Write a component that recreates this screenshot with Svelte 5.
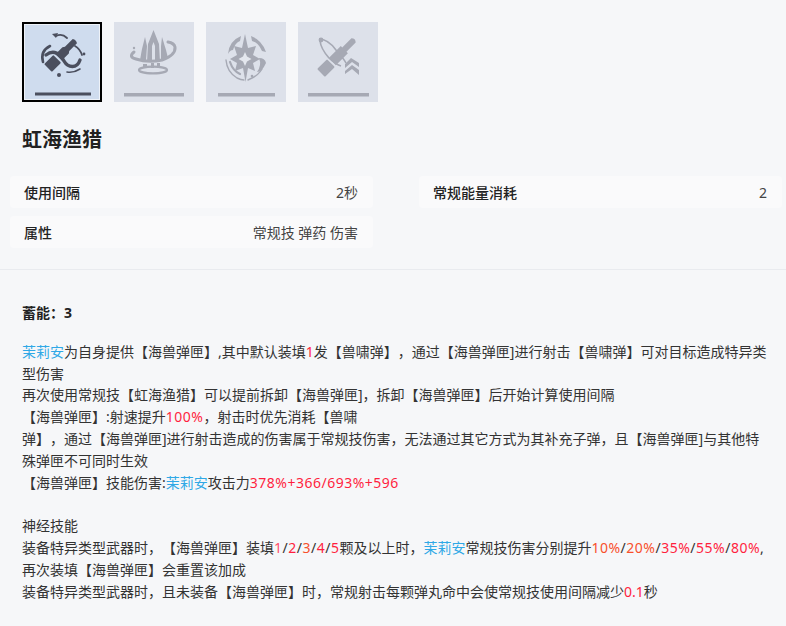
<script>
  const tabs = [0, 1, 2, 3];
  const rows = [
    { label: "使用间隔", value: "2秒" },
    { label: "常规能量消耗", value: "2" },
    { label: "属性", value: "常规技 弹药 伤害" },
  ];
</script>

<div class="page">
  <div class="tabs">
    {#each tabs as t}
      <div class="tab" class:active={t === 0}>
        <svg viewBox="0 0 80 80" width="80" height="80" aria-hidden="true">
          {#if t === 0}
            <g fill="#4b4f5e" stroke="none">
              <g transform="translate(38 34) rotate(-45)">
                <rect x="-17" y="-5.5" width="13" height="11" rx="1" />
                <path d="M-2 -4.5 H8 L10 -3 H21 Q23 0 21 3 H10 L8 4.5 H-2 Z" />
              </g>
              <path d="M30 12 l6 -1 l-2 5 Z" />
              <circle cx="37" cy="53" r="2" />
              <circle cx="62" cy="32" r="1.4" />
              <rect x="13" y="70.5" width="56" height="3" />
            </g>
            <g fill="none" stroke="#4b4f5e" stroke-linecap="round">
              <path d="M21 40 Q18 29 28 24" stroke-width="2.6" />
              <path d="M24 33 C32 27 38 32 42 39 C46 46 55 47 58 38" stroke-width="3.4" />
              <path d="M53 24 Q58 27 60 33" stroke-width="1.8" />
              <path d="M34 14 Q40 11 45 16" stroke-width="1.8" />
              <path d="M45 50 Q52 51 58 47" stroke-width="1.6" />
            </g>
          {:else if t === 1}
            <g fill="#a6a9b4">
              <path d="M39.5 8 L45 22 L46 40 H41 V24 L39.5 20 L38 24 V40 H33 L34 22 Z" />
              <path d="M31 15 L33 24 L32 38 L26 38 L28 27 Z" />
              <path d="M48 15 L52 28 L54 36 L47 38 L47 24 Z" />
              <rect x="29" y="42" width="4" height="3.5" />
              <rect x="37" y="41" width="3" height="5" />
              <rect x="43" y="41" width="3" height="5" />
              <circle cx="20" cy="26" r="1.2" />
              <rect x="10" y="71" width="60" height="3.5" />
            </g>
            <g fill="none" stroke="#a6a9b4" stroke-linecap="round">
              <path d="M20 30 Q14 35 22 37 Q34 41 48 38 Q62 33 61 25 Q60 21 54 20" stroke-width="3" />
              <ellipse cx="39" cy="48" rx="14" ry="3.4" stroke-width="2.2" />
            </g>
          {:else if t === 2}
            <g fill="#a6a9b4">
              <path d="M39 12 L42 26 L50 24 L47 33 L54 37 L47 41 L49 49 L42 46 L39.5 60 L37 46 L29 49 L31 41 L24 37 L31 33 L28 24 L36 26 Z" />
              <path d="M22 32 Q23 19 35 14 L34 19 Q29 21 27 28 Q24 28 22 32 Z" />
              <path d="M45 14 Q56 18 60 30 L56 29 Q52 20 46 19 Z" />
              <path d="M53 36 Q59 36 60 41 Q56 50 51 50 Q56 43 53 36 Z" />
              <circle cx="46" cy="54" r="1.3" />
              <rect x="12" y="71" width="57" height="3.5" />
            </g>
            <path d="M39 30 L41 34.5 L45.5 37 L41 39.5 L39 44 L37 39.5 L32.5 37 L37 34.5 Z" fill="#e4e7ee" />
            <g fill="none" stroke="#a6a9b4" stroke-linecap="round">
              <path d="M20 38 Q21 50 31 56 Q35 58 38 58" stroke-width="1.4" />
              <path d="M24 40 Q27 49 34 52" stroke-width="2.2" />
              <path d="M56 47 Q52 54 42 58" stroke-width="1.4" />
            </g>
          {:else}
            <g fill="#a6a9b4">
              <g transform="translate(40 34) rotate(-45)">
                <rect x="-24" y="-5.5" width="14" height="11" rx="1" />
                <path d="M-8 -5 H9 V-3 H22 Q25 0 22 3 H9 V5 H-8 Z" />
              </g>
              <path d="M47 42 L53 36 L61 41 V45 L54 40 L47 46 Z" />
              <path d="M47 49 L54 43 L61 48 V53 L54 47 L47 52 Z" />
              <rect x="10" y="71" width="61" height="3.5" />
            </g>
            <path d="M21 17 Q30 17 38 28 Q46 37 48 41" fill="none" stroke="#a6a9b4" stroke-width="1.6" />
            <path d="M22 19 Q23 27 31 36 Q37 42 43 44" fill="none" stroke="#a6a9b4" stroke-width="1.6" />
            <circle cx="23" cy="18" r="2.4" fill="#a6a9b4" />
          {/if}
        </svg>
      </div>
    {/each}
  </div>

  <h2 class="title">虹海渔猎</h2>

  <div class="attrs">
    {#each rows as r}
      <div class="row">
        <span class="label">{r.label}</span>
        <span class="value">{r.value}</span>
      </div>
    {/each}
  </div>

  <div class="desc">
    <div class="charge">蓄能：<span class="num">3</span></div>
    <p>
      <span class="blue">茉莉安</span>为自身提供【海兽弹匣】,其中默认装填<span class="red">1</span>发【兽啸弹】，通过【海兽弹匣]进行射击【兽啸弹】可对目标造成特异类型伤害<br />
      再次使用常规技【虹海渔猎】可以提前拆卸【海兽弹匣]，拆卸【海兽弹匣】后开始计算使用间隔<br />
      【海兽弹匣】:射速提升<span class="red num">100%</span>，射击时优先消耗【兽啸<br />
      弹】，通过【海兽弹匣]进行射击造成的伤害属于常规技伤害，无法通过其它方式为其补充子弹，且【海兽弹匣]与其他特殊弹匣不可同时生效<br />
      【海兽弹匣】技能伤害:<span class="blue">茉莉安</span>攻击力<span class="red num">378%+366/693%+596</span>
    </p>
    <p>
      神经技能<br />
      装备特异类型武器时，【海兽弹匣】装填<span class="num"><span class="pink">1</span>/<span class="red">2</span>/<span class="orange">3</span>/<span class="red">4</span>/<span class="red">5</span></span>颗及以上时，<span class="blue">茉莉安</span>常规技伤害分别提升<span class="num"><span class="orange">10%</span>/<span class="orange">20%</span>/<span class="red">35%</span>/<span class="red">55%</span>/<span class="red">80%</span></span>,<br />
      再次装填【海兽弹匣】会重置该加成<br />
      装备特异类型武器时，且未装备【海兽弹匣】时，常规射击每颗弹丸命中会使常规技使用间隔减少<span class="red">0.1</span>秒
    </p>
  </div>
</div>

<style>
  :global(body) {
    background: #f6f7f9;
  }

  .page {
    font-family: "Noto Sans", "Noto Sans CJK SC", sans-serif;
    text-spacing-trim: space-all;
    color: #333;
    height: 626px;
    overflow: hidden;
    box-sizing: border-box;
    padding-top: 22px;
  }

  .tabs {
    display: flex;
    gap: 12px;
    padding-left: 22px;
  }

  .tab {
    width: 80px;
    height: 80px;
    background: #dde1ea;
    position: relative;
  }

  .tab svg {
    display: block;
    filter: blur(0.6px);
  }

  .tab.active {
    background: #cfdcee;
    outline: 2px solid #000;
    outline-offset: -2px;
    box-shadow: inset 0 0 0 3px #eef2f8;
  }

  .title {
    margin: 24px 0 0 22px;
    font-size: 20px;
    line-height: 28px;
    font-weight: 700;
    color: #222;
  }

  .attrs {
    display: grid;
    grid-template-columns: 363px 363px;
    column-gap: 46px;
    row-gap: 8px;
    margin-top: 22px;
    padding-left: 10px;
    padding-bottom: 21px;
    border-bottom: 1px solid #e9ebef;
  }

  .row {
    display: flex;
    justify-content: space-between;
    align-items: center;
    height: 32px;
    padding: 0 15px 0 14px;
    background: #fafafb;
    border-radius: 4px;
    font-size: 14px;
  }

  .label {
    font-weight: 500;
    color: #222;
  }

  .value {
    color: #444;
  }

  .desc {
    padding: 0 19px 0 22px;
    font-size: 14px;
    line-height: 21.8px;
  }

  .charge {
    margin-top: 32px;
    font-weight: 700;
    color: #222;
  }

  p {
    margin: 0 0 21.8px;
  }

  .charge + p {
    margin-top: 17px;
  }

  .num {
    letter-spacing: 0.5px;
  }

  .blue {
    color: #2fa8e6;
  }

  .red {
    color: #ff1f3f;
  }

  .orange {
    color: #f8502c;
  }

  .pink {
    color: #ff4d6a;
  }
</style>
